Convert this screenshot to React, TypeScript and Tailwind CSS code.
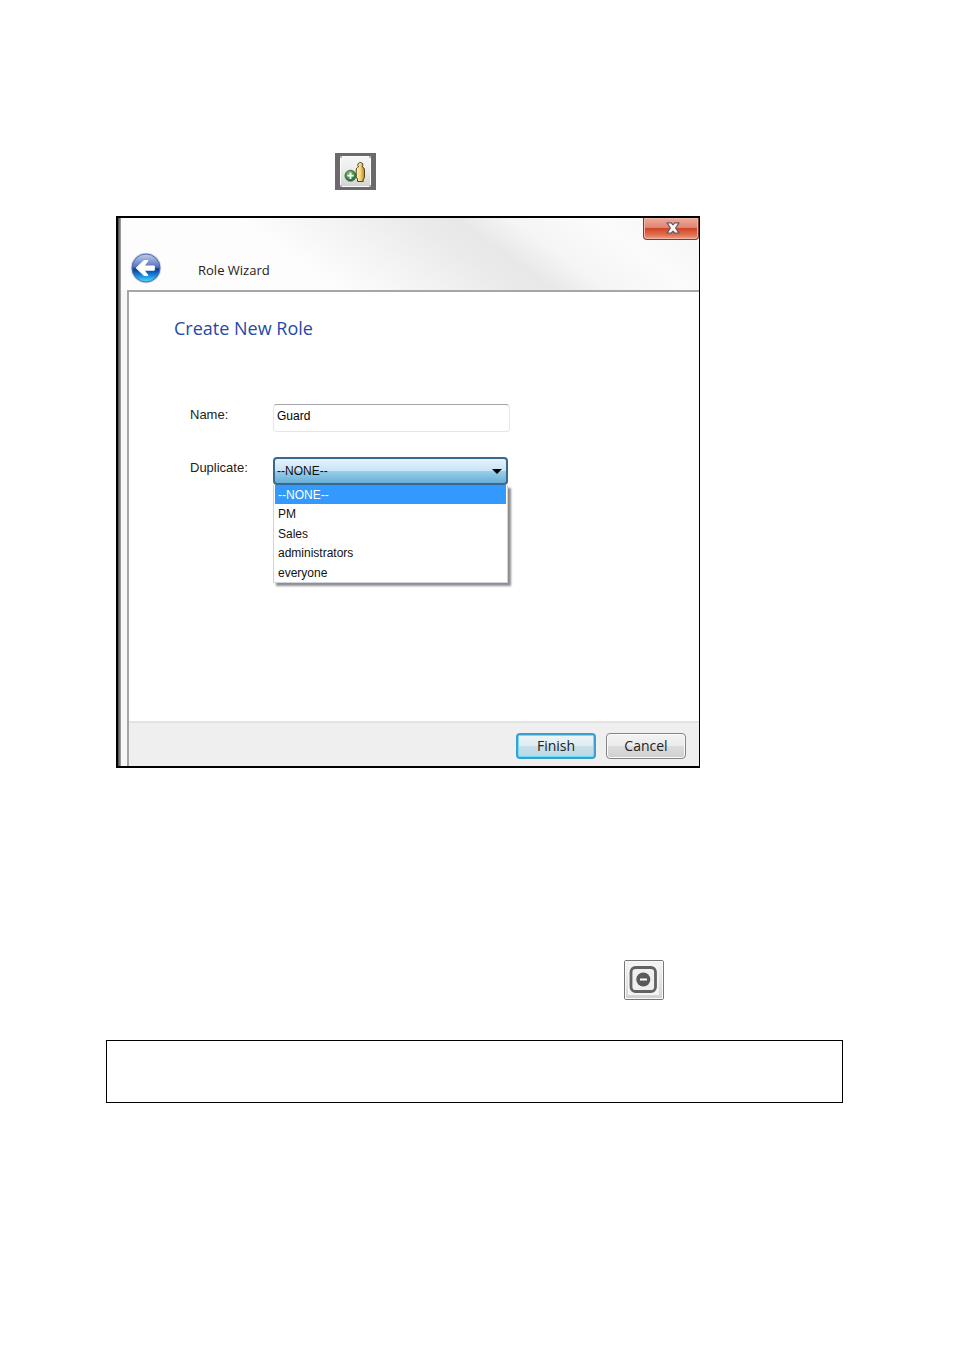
import React, { useState } from 'react';

const roles = ['--NONE--', 'PM', 'Sales', 'administrators', 'everyone'];

const AddRoleIcon = () => (
    <svg viewBox="0 0 41 37" className="h-[37px] w-[41px]" aria-hidden="true">
        <defs>
            <linearGradient id="addFace" x1="0" y1="0" x2="0" y2="1">
                <stop offset="0" stopColor="#f6f6f6" />
                <stop offset="0.45" stopColor="#ececec" />
                <stop offset="1" stopColor="#d2d2d2" />
            </linearGradient>
            <linearGradient id="gold" x1="0" y1="0" x2="1" y2="0">
                <stop offset="0" stopColor="#fff3c0" />
                <stop offset="0.5" stopColor="#f6d583" />
                <stop offset="1" stopColor="#b98412" />
            </linearGradient>
            <radialGradient id="green" cx="0.4" cy="0.3" r="0.7">
                <stop offset="0" stopColor="#7fbd7c" />
                <stop offset="1" stopColor="#1f6f2c" />
            </radialGradient>
        </defs>
        <rect width="41" height="37" fill="#6b6969" />
        <rect x="5.5" y="3.5" width="30" height="30" rx="1" fill="url(#addFace)" stroke="#fdfdfd" />
        <path d="M5 3h2v2h-2zM34 3h2v2h-2zM5 32h2v2h-2zM34 32h2v2h-2z" fill="#aeb4c4" />
        <path
            d="M25.5 9.500c1.500 0 2.400 1 2.400 2.300 0 .8-.3 1.500-.8 2 1.600.5 2.400 1.700 2.400 3.200v7.500c0 .7-.5 1.200-1.300 1.400v2.600h-5.700v-3c-.9-.2-1.300-.7-1.300-1.500V17c0-1.500.8-2.700 2.400-3.200-.5-.5-.8-1.200-.8-2 0-1.300 1.200-2.300 2.700-2.300z"
            fill="url(#gold)"
            stroke="#55431c"
            strokeWidth="1"
        />
        <circle cx="15.500" cy="22.700" r="5.500" fill="url(#green)" stroke="#2c5b34" strokeWidth="0.800" />
        <path d="M15.500 19.500v6.400M12.300 22.700h6.400" stroke="#fff" strokeWidth="1.800" />
    </svg>
);

const RemoveIcon = () => (
    <svg viewBox="0 0 40 40" className="h-10 w-10" aria-hidden="true">
        <defs>
            <linearGradient id="removeFace" x1="0" y1="0" x2="0" y2="1">
                <stop offset="0" stopColor="#f4f4f4" />
                <stop offset="0.6" stopColor="#e2e2e2" />
                <stop offset="1" stopColor="#d0d0d0" />
            </linearGradient>
        </defs>
        <rect x="0.5" y="0.5" width="39" height="39" rx="1.5" fill="url(#removeFace)" stroke="#777" />
        <rect x="1.5" y="1.5" width="37" height="37" fill="none" stroke="#f8f8f8" />
        <rect x="4" y="4" width="31" height="31" fill="#f3f4f5" />
        <rect x="7" y="7.5" width="24.500" height="24" rx="4.5" fill="#efefef" stroke="#626262" strokeWidth="2.800" />
        <circle cx="19.300" cy="19.500" r="7" fill="#5a5a5a" />
        <path d="M16 19.500h7" stroke="#fff" strokeWidth="2" />
    </svg>
);

const BackIcon = () => (
    <svg viewBox="0 0 32 32" className="h-8 w-8" aria-hidden="true">
        <defs>
            <linearGradient id="backFace" x1="0" y1="0" x2="0" y2="1">
                <stop offset="0" stopColor="#c3cdec" />
                <stop offset="0.46" stopColor="#5575c0" />
                <stop offset="0.54" stopColor="#0c3c97" />
                <stop offset="0.75" stopColor="#1680d8" />
                <stop offset="1" stopColor="#4fdcff" />
            </linearGradient>
        </defs>
        <circle cx="16" cy="16" r="15.300" fill="#d4d6dc" />
        <circle cx="16" cy="16" r="14" fill="url(#backFace)" stroke="#4a6cac" strokeWidth="1" />
        <path
            d="M6.200 16 14 8.600h4L14.200 14H24.300v4.200H14.200L18 23.400h-4z"
            fill="#fff"
            stroke="#fff"
            strokeWidth="1"
            strokeLinejoin="round"
        />
    </svg>
);

const CloseIcon = () => (
    <svg viewBox="0 0 14 12" className="h-3 w-3.5" aria-hidden="true">
        <path
            d="M1 .8h4.200L7 2.900 8.800.8H13L9.600 6l3.400 5.200H8.800L7 9.100l-1.800 2.100H1L4.400 6z"
            fill="#f8f8f8"
            stroke="#6b5560"
            strokeWidth="1.200"
            strokeLinejoin="round"
        />
    </svg>
);

const RoleWizard = () => {
    const [name, setName] = useState('Guard');
    const [duplicate, setDuplicate] = useState(roles[0]);
    const [isListOpen, setIsListOpen] = useState(true);

    const handlePick = (role: string) => {
        setDuplicate(role);
        setIsListOpen(false);
    };

    return (
        <section className="ml-2.5 flex max-w-[584px] border-2 border-r border-black bg-[#f7f7f7]">
            <div className="w-[3px] shrink-0 bg-linear-to-r from-[#444] to-[#aaa]" />
            <div className="min-w-0 grow">
                <header className="flex h-[72px] items-end bg-[linear-gradient(36deg,#fdfdfd_32%,#f3f3f3_46%,#eaeaea_58%,#e8e8e8_64%,#f5f5f5_72%,#fbfbfb_84%,#f5f5f5_100%)] pb-1.5 pl-[9px]">
                    <button type="button" aria-label="Back" className="shrink-0">
                        <BackIcon />
                    </button>
                    <h1 className="ml-9 grow pb-1 font-['Open_Sans',sans-serif] text-[13px] leading-5 text-[#222]">
                        Role Wizard
                    </h1>
                    <button
                        type="button"
                        aria-label="Close"
                        className="flex h-[22px] w-14 items-center justify-center self-start rounded-b border border-t-0 border-[#7b3a32] bg-[linear-gradient(#eeaa9a,#e08572_45%,#cf4529_50%,#e0704f_80%,#f0a088)] pb-0.5 pl-1 shadow-[inset_0_0_0_1px_#f3b5a6]"
                    >
                        <CloseIcon />
                    </button>
                </header>

                <div className="ml-1.5 border-t-2 border-l-2 border-[#a6a6a6] bg-white">
                    <form onSubmit={(e) => e.preventDefault()}>
                        <div className="h-[429px] pt-6 pl-[45px]">
                            <h2 className="font-['Open_Sans',sans-serif] text-lg leading-6 text-[#1f4aa8]">
                                Create New Role
                            </h2>
                            <div className="mt-16 ml-4 grid grid-cols-[83px_minmax(0,237px)] gap-y-[25px] font-['Liberation_Sans',sans-serif] text-[13px] leading-[22px] text-[#222]">
                                <label htmlFor="role-name">Name:</label>
                                <input
                                    id="role-name"
                                    value={name}
                                    onChange={(e) => setName(e.target.value)}
                                    className="h-7 rounded-sm border border-[#e3e6ee] border-t-[#a5a6ad] bg-white px-[3px] pb-1 text-[12px] text-black outline-none"
                                />
                                <label htmlFor="role-duplicate">Duplicate:</label>
                                <div className="relative mr-0.5">
                                    <select
                                        id="role-duplicate"
                                        value={duplicate}
                                        onChange={(e) => handlePick(e.target.value)}
                                        onMouseDown={(e) => {
                                            e.preventDefault();
                                            setIsListOpen(!isListOpen);
                                        }}
                                        className="block h-7 w-full appearance-none rounded-sm border-2 border-[#39698c] bg-[linear-gradient(#e6f3fb,#c8e5f5_48%,#98cde9_52%,#67afd8)] px-0.5 text-[12px] text-[#111] outline-none"
                                    >
                                        {roles.map((role) => (
                                            <option key={role}>{role}</option>
                                        ))}
                                    </select>
                                    <svg
                                        viewBox="0 0 10 5"
                                        className="pointer-events-none absolute top-3 right-1.5 h-[5px] w-2.5"
                                        aria-hidden="true"
                                    >
                                        <path d="M0 0h10L5 5z" fill="#000" />
                                    </svg>
                                    {isListOpen && (
                                        <ul
                                            role="listbox"
                                            aria-label="Duplicate"
                                            className="absolute inset-x-0 top-full grid h-[98px] grid-rows-5 border border-t-0 border-[#cfd3e0] bg-white text-[12px] leading-5 text-[#111] shadow-[3px_3px_2px_#8f8f8f]"
                                        >
                                            {roles.map((role) => (
                                                <li
                                                    key={role}
                                                    role="option"
                                                    aria-selected={role === duplicate}
                                                    onClick={() => handlePick(role)}
                                                    className="mx-px pl-[3px] aria-selected:bg-[#3399ff] aria-selected:text-white"
                                                >
                                                    {role}
                                                </li>
                                            ))}
                                        </ul>
                                    )}
                                </div>
                            </div>
                        </div>

                        <footer className="flex h-[45px] items-start justify-end gap-2.5 border-t-2 border-[#e3e3e3] bg-[#efefef] pt-2.5 pr-[13px] font-['Open_Sans',sans-serif] text-sm text-[#222]">
                            <button
                                type="submit"
                                className="h-[26px] w-20 rounded border-2 border-[#3c9fd0] bg-[linear-gradient(#edf5f8,#dfedf3_48%,#c9e0ea_52%,#bcd8e4)] shadow-[inset_0_0_0_1px_#6fdcf8]"
                            >
                                Finish
                            </button>
                            <button
                                type="button"
                                className="h-[26px] w-20 rounded border border-[#858585] bg-[linear-gradient(#f3f3f3,#ebebeb_48%,#dcdcdc_52%,#cfcfcf)] shadow-[inset_0_0_0_1px_#fafafa]"
                            >
                                Cancel
                            </button>
                        </footer>
                    </form>
                </div>
            </div>
        </section>
    );
};

const App = () => {
    return (
        <main className="min-h-screen bg-white pt-[153px] pr-28 pb-16 pl-[106px]">
            <button type="button" aria-label="Add role" className="ml-[229px] block">
                <AddRoleIcon />
            </button>
            <div className="mt-[26px]">
                <RoleWizard />
            </div>
            <button type="button" aria-label="Remove role" className="mt-48 mr-[179px] ml-auto block">
                <RemoveIcon />
            </button>
            <div className="mt-10 h-[63px] border border-black" />
        </main>
    );
};

export default App;
